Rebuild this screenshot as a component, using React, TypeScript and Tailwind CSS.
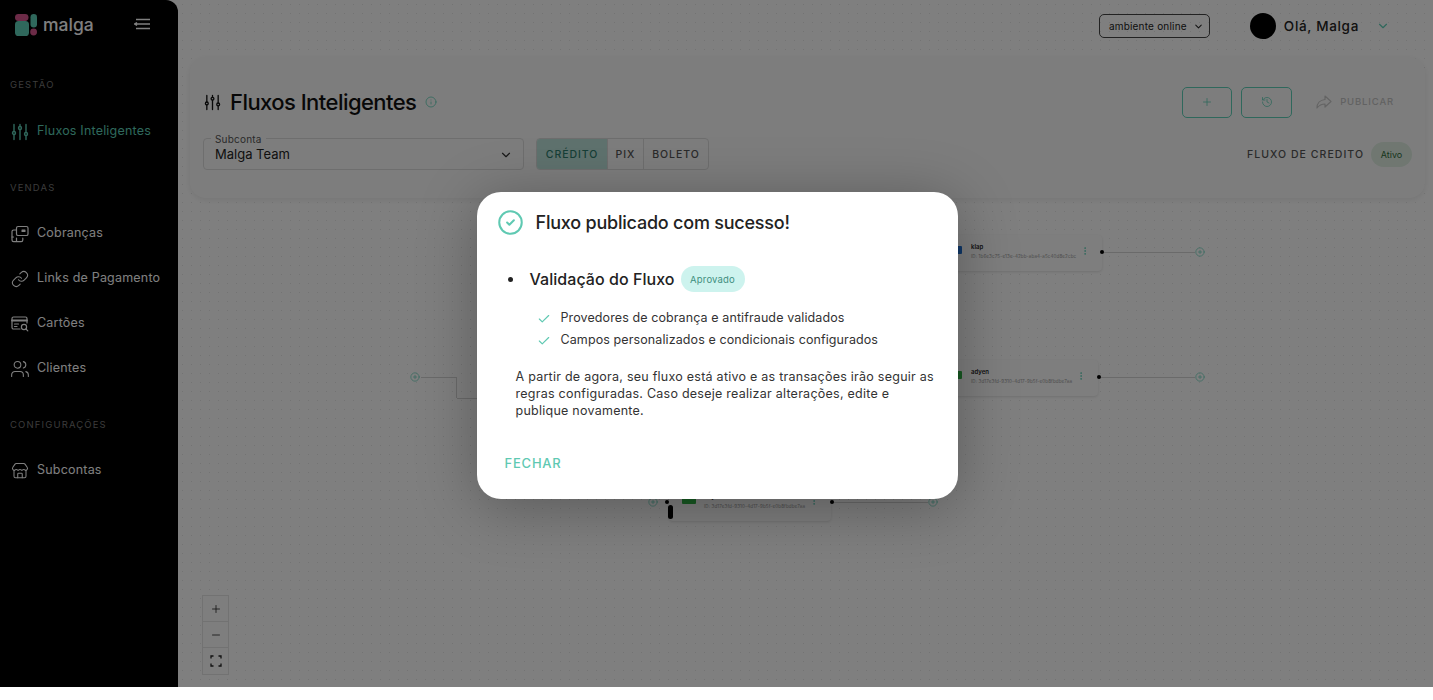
import { ChevronDown, Check, CircleCheck, Info, Link, Plus, Minus, History, Users, Store, MoreVertical, CirclePlus } from "lucide-react";

function SlidersIcon({ className }: { className?: string }) {
  return (
    <svg viewBox="0 0 18 18" fill="none" stroke="currentColor" strokeWidth="1.4" strokeLinecap="round" className={className}>
      <path d="M3 1.5v7M3 11.5v5M9 1.5v2M9 6.5v10M15 1.5v8M15 12.5v4" />
      <circle cx="3" cy="10" r="1.5" />
      <circle cx="9" cy="5" r="1.5" />
      <circle cx="15" cy="11" r="1.5" />
    </svg>
  );
}

function ChargesIcon({ className }: { className?: string }) {
  return (
    <svg viewBox="0 0 18 18" fill="none" stroke="currentColor" strokeWidth="1.2" strokeLinecap="round" strokeLinejoin="round" className={className}>
      <rect x="5.5" y="1.5" width="11.5" height="9" rx="1.6" />
      <rect x="10.5" y="4.5" width="4" height="2.6" rx="0.4" fill="currentColor" stroke="none" />
      <path d="M5.5 5H2.6A1.6 1.6 0 0 0 1 6.6V15a1.6 1.6 0 0 0 1.6 1.6h7.6a1.6 1.6 0 0 0 1.6-1.6v-1.8" />
      <path d="M1 12h1.5M5.5 13v3" />
    </svg>
  );
}

function CardsIcon({ className }: { className?: string }) {
  return (
    <svg viewBox="0 0 18 18" fill="none" stroke="currentColor" strokeWidth="1.2" strokeLinecap="round" strokeLinejoin="round" className={className}>
      <path d="M9 14H2.5A1.5 1.5 0 0 1 1 12.5v-9A1.5 1.5 0 0 1 2.5 2h12A1.5 1.5 0 0 1 16 3.5V8" />
      <path d="M1 5.5h15" strokeWidth="1.8" />
      <path d="M3.5 9h4M3.5 11.5h2.5" />
      <circle cx="13" cy="12" r="2.6" />
      <path d="M15 14l1.8 1.8" />
    </svg>
  );
}

function Logo() {
  return (
    <svg viewBox="0 0 22 22" className="h-[22px] w-[22px]">
      <rect x="0" y="0" width="13.5" height="7" rx="3.4" fill="#d9568f" />
      <rect x="0" y="7" width="14" height="15" rx="3.6" fill="#5fd0b8" />
      <rect x="15.5" y="0" width="6.5" height="13.5" rx="3.2" fill="#5fd0b8" />
      <circle cx="18.6" cy="18" r="3.4" fill="#d9568f" />
    </svg>
  );
}

function NavLabel({ children, className }: { children: string; className: string }) {
  return <p className={`pl-2.5 text-[9.5px] leading-3 tracking-[0.12em] text-[#777] ${className}`}>{children}</p>;
}

function NavItem({ icon, label, active }: { icon: React.ReactNode; label: string; active?: boolean }) {
  return (
    <div className={`flex h-[45px] items-center gap-2 pl-[11px] text-[12.5px] tracking-[0.016em] ${active ? "text-[#5fd0b8]" : "text-white"}`}>
      {icon}
      <span>{label}</span>
    </div>
  );
}

function Sidebar() {
  const icon = "h-[18px] w-[18px] shrink-0";
  return (
    <aside className="flex h-full w-[178px] shrink-0 flex-col rounded-tr-xl bg-black">
      <div className="flex h-[50px] items-center pl-[15px] pr-[28px]">
        <Logo />
        <span className="ml-[6px] text-[17.5px] font-medium leading-none text-white">malga</span>
        <svg viewBox="0 0 16 12" fill="none" stroke="#fff" strokeWidth="1.3" className="-mt-0.5 ml-auto h-3 w-4">
          <path d="M2 1.5h14M0.5 6H16M2 10.5h14M3 4.5L0.5 6 3 7.5" />
        </svg>
      </div>
      <NavLabel className="mt-[29px]">GESTÃO</NavLabel>
      <div className="mt-[18px]">
        <NavItem active label="Fluxos Inteligentes" icon={<SlidersIcon className={icon} />} />
      </div>
      <NavLabel className="mt-7">VENDAS</NavLabel>
      <div className="mt-[17px]">
        <NavItem label="Cobranças" icon={<ChargesIcon className={icon} />} />
        <NavItem label="Links de Pagamento" icon={<Link strokeWidth={1.4} className={icon} />} />
        <NavItem label="Cartões" icon={<CardsIcon className={icon} />} />
        <NavItem label="Clientes" icon={<Users strokeWidth={1.3} className="-mx-px h-5 w-5 shrink-0" />} />
      </div>
      <NavLabel className="mt-7">CONFIGURAÇÕES</NavLabel>
      <div className="mt-[17px]">
        <NavItem label="Subcontas" icon={<Store strokeWidth={1.4} className={icon} />} />
      </div>
    </aside>
  );
}

function TopBar() {
  return (
    <header className="flex h-[52px] items-center justify-end">
      <button className="flex h-6 w-[111px] items-center justify-center gap-1.5 rounded-[5px] border-[1.5px] border-[#444] pl-1 text-[10px] tracking-[0.02em] text-[#222]">
        ambiente online
        <ChevronDown size={11} strokeWidth={2.2} />
      </button>
      <div className="ml-10 h-[26px] w-[26px] rounded-full bg-black" />
      <span className="ml-2 text-[13.5px] font-medium tracking-[0.05em] text-[#222]">Olá, Malga</span>
      <ChevronDown size={14} strokeWidth={2} className="ml-[17px] mr-[43px] text-[#5fd0b8]" />
    </header>
  );
}

function FilterCard() {
  return (
    <section className="ml-3 mr-2 mt-[5px] h-[141px] rounded-2xl bg-[#fbfbfb] px-[13px] shadow-[0_2px_6px_rgba(0,0,0,0.08)]">
      <div className="flex h-[81px] items-center justify-between pt-[9px]">
        <div className="flex items-center pl-[1px]">
          <SlidersIcon className="h-[17px] w-[17px] text-[#111]" />
          <h1 className="ml-[9px] text-[22px] font-medium tracking-[-0.025em] text-[#111]">Fluxos Inteligentes</h1>
          <Info size={12} strokeWidth={1.6} className="ml-[9px] text-[#5fd0b8]" />
        </div>
        <div className="flex items-center pr-[18px]">
          <button className="flex h-[31px] w-[50px] items-center justify-center rounded-[5px] border-[1.5px] border-[#5fd0b8] text-[#5fd0b8]">
            <Plus size={12} strokeWidth={1.6} />
          </button>
          <button className="ml-[9px] flex h-[31px] w-[51px] items-center justify-center rounded-[5px] border-[1.5px] border-[#5fd0b8] text-[#5fd0b8]">
            <History size={12} strokeWidth={1.6} />
          </button>
          <svg viewBox="0 0 16 14" fill="none" stroke="#c8c8c8" strokeWidth="1.2" strokeLinejoin="round" className="ml-6 h-[14px] w-4">
            <path d="M9 1l6 5.5L9 12V9C5.5 9 3 10.5 1 13c0-4.5 3-8 8-8.5z" />
          </svg>
          <span className="ml-2 text-[9.5px] font-medium tracking-[0.09em] text-[#c4c4c4]">PUBLICAR</span>
        </div>
      </div>
      <div className="flex items-start justify-between">
        <div className="flex">
          <div className="relative flex h-8 w-[321px] items-center justify-between rounded border border-[#ddd] pl-[11px] pr-[10px] pt-px">
            <span className="absolute -top-[6px] left-[7px] bg-[#fbfbfb] px-1 text-[10px] leading-3 tracking-[0.02em] text-[#555]">Subconta</span>
            <span className="text-[13px] text-[#222]">Malga Team</span>
            <ChevronDown size={14} strokeWidth={2} className="text-[#333]" />
          </div>
          <div className="ml-3 flex h-8 w-[173px] overflow-hidden rounded border border-[#ddd] text-[10.5px] font-medium tracking-[0.09em] text-[#555]">
            <span className="flex w-[70px] items-center justify-center bg-[#bfe5dc] pt-0.5 text-[#2e7e6e]">CRÉDITO</span>
            <span className="flex w-9 items-center justify-center border-l border-[#ddd] pt-0.5">PIX</span>
            <span className="flex flex-1 items-center justify-center border-l border-[#ddd] pt-0.5">BOLETO</span>
          </div>
        </div>
        <div className="mt-1 flex items-center">
          <span className="text-[10.5px] font-medium tracking-[0.1em] text-[#555]">FLUXO DE CREDITO</span>
          <span className="ml-[7px] flex h-[25px] w-[41px] items-center justify-center rounded-full bg-[#e0efe3] text-[9px] text-[#2f6b3a]">Ativo</span>
        </div>
      </div>
    </section>
  );
}

function NodeCard({ name, id, color, className, textLeft, pillLeft }: { name: string; id: string; color: string; className: string; textLeft: string; pillLeft: string }) {
  return (
    <div className={`absolute h-[36px] rounded bg-[#fcfcfc] shadow-[0_1px_3px_rgba(0,0,0,0.12)] ${className}`}>
      <span className={`absolute top-[11px] h-2 w-3.5 rounded-[1px] ${pillLeft} ${color}`} />
      <p className={`absolute top-[7px] text-[6px] font-semibold text-[#222] ${textLeft}`}>{name}</p>
      <p className={`absolute top-[19px] text-[4.5px] tracking-[0.03em] text-[#999] ${textLeft}`}>{id}</p>
      <MoreVertical size={10} strokeWidth={2} className="absolute right-[12px] top-[11px] text-[#5fd0b8]" />
    </div>
  );
}

function Canvas() {
  const add = "absolute h-[10px] w-[10px] text-[#5fd0b8]";
  const dot = "absolute h-1 w-1 rounded-full bg-black";
  return (
    <div className="pointer-events-none absolute inset-0 overflow-hidden">
      <NodeCard name="klap" id="ID: 1b6e3c75-e13e-42bb-aba4-a5c40d8e2cbc" color="bg-[#1d6fd1]" textLeft="left-[44px]" pillLeft="left-[21px]" className="left-[749px] top-[235px] w-[175px]" />
      <NodeCard name="adyen" id="ID: 3d17e3fd-9310-4d17-9b5f-e0b8fbdbe7aa" color="bg-[#2fb344]" textLeft="left-[44px]" pillLeft="left-[21px]" className="left-[749px] top-[360px] w-[171px]" />
      <NodeCard name="adyen" id="ID: 3d17e3fd-9310-4d17-9b5f-e0b8fbdbe7aa" color="bg-[#2fb344]" textLeft="left-[35px]" pillLeft="left-[13px]" className="left-[491px] top-[485px] w-[162px]" />

      <div className="absolute left-[924px] top-[252px] h-px w-[93px] bg-[#d4d4d4]" />
      <div className="absolute left-[921px] top-[377px] h-px w-[96px] bg-[#d4d4d4]" />
      <div className="absolute left-[654px] top-[502px] h-px w-[96px] bg-[#d4d4d4]" />
      <div className="absolute left-[243px] top-[377px] h-[21px] w-[36px] border-r border-t border-[#d4d4d4]" />
      <div className="absolute left-[279px] top-[398px] h-px w-[30px] bg-[#d4d4d4]" />

      <span className={`${dot} left-[922px] top-[250px]`} />
      <span className={`${dot} left-[919px] top-[375px]`} />
      <span className={`${dot} left-[652px] top-[500px]`} />
      <span className={`${dot} left-[487px] top-[500px]`} />
      <span className="absolute left-[490px] top-[505px] h-[14px] w-[5px] rounded-sm bg-black" />

      <CirclePlus strokeWidth={1.6} className={`${add} left-[1017px] top-[247px]`} />
      <CirclePlus strokeWidth={1.6} className={`${add} left-[1017px] top-[372px]`} />
      <CirclePlus strokeWidth={1.6} className={`${add} left-[750px] top-[497px]`} />
      <CirclePlus strokeWidth={1.6} className={`${add} left-[470px] top-[497px]`} />
      <CirclePlus strokeWidth={1.6} className={`${add} left-[232px] top-[372px]`} />
    </div>
  );
}

function ZoomControls() {
  const cell = "flex h-[26px] items-center justify-center border-b border-[#e4e4e4] text-[#222] last:border-b-0";
  return (
    <div className="absolute left-[24px] top-[595px] w-[27px] border border-[#e4e4e4] bg-[#fcfcfc]">
      <div className={cell}><Plus size={12} strokeWidth={1.6} /></div>
      <div className={cell}><Minus size={12} strokeWidth={1.6} /></div>
      <div className={cell}>
        <svg viewBox="0 0 12 12" fill="none" stroke="currentColor" strokeWidth="1.3" className="h-3 w-3">
          <path d="M1 3.5V1h2.5M8.5 1H11v2.5M11 8.5V11H8.5M3.5 11H1V8.5" />
        </svg>
      </div>
    </div>
  );
}

function PublishedModal() {
  return (
    <div className="w-[481px] rounded-3xl bg-white shadow-[0_8px_60px_rgba(0,0,0,0.3)]">
      <div className="flex items-center pl-5 pt-[17px]">
        <CircleCheck size={27} strokeWidth={1.8} className="text-[#5fc9b2]" />
        <h2 className="ml-3 text-[18px] font-medium tracking-[-0.012em] text-[#222]">Fluxo publicado com sucesso!</h2>
      </div>
      <div className="mt-[30px] flex items-center pl-[31px]">
        <span className="h-[5px] w-[5px] rounded-full bg-[#222]" />
        <h3 className="ml-[17px] text-[16px] font-medium tracking-[0.003em] text-[#222]">Validação do Fluxo</h3>
        <span className="ml-[6px] flex h-[26px] w-[64px] items-center justify-center rounded-full bg-[#cdf3ee] pt-0.5 text-[9.5px] tracking-[0.02em] text-[#3f8f7e]">Aprovado</span>
      </div>
      <ul className="mt-[18px] flex flex-col gap-[5px] pl-[60px]">
        {["Provedores de cobrança e antifraude validados", "Campos personalizados e condicionais configurados"].map((item) => (
          <li key={item} className="flex h-[17px] items-center text-[12.5px] tracking-[0.008em] text-[#333]">
            <Check size={14} strokeWidth={2} className="text-[#5fc9b2]" />
            <span className="ml-[10px]">{item}</span>
          </li>
        ))}
      </ul>
      <p className="ml-[39px] mt-[19px] w-[425px] text-[12.5px] leading-[17px] tracking-[0.02em] text-[#333]">
        A partir de agora, seu fluxo está ativo e as transações irão seguir as regras configuradas. Caso deseje realizar alterações, edite e publique novamente.
      </p>
      <div className="mt-[31px] pb-[25px] pl-[28px]">
        <button className="text-[13px] font-medium leading-4 tracking-[0.06em] text-[#5fc9b2]">FECHAR</button>
      </div>
    </div>
  );
}

export default function App() {
  return (
    <div className="h-[700px] w-full overflow-hidden bg-white font-['Inter',sans-serif]">
      <div className="relative flex h-[687px] overflow-hidden bg-white">
        <Sidebar />
        <main className="relative min-w-0 flex-1 bg-[radial-gradient(#e6e6e6_0.6px,transparent_0.6px)] bg-[size:9px_9px]">
          <TopBar />
          <FilterCard />
          <Canvas />
          <ZoomControls />
        </main>
        <div className="absolute inset-0 flex items-center justify-center bg-black/50 pl-px pt-1">
          <PublishedModal />
        </div>
      </div>
    </div>
  );
}
